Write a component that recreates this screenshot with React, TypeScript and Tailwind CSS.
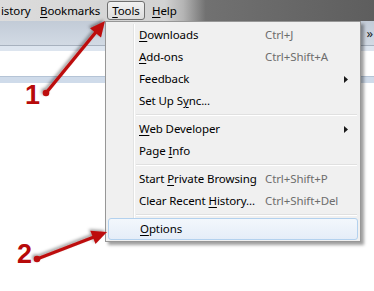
import type { ReactNode } from 'react'

type Item =
  | { kind: 'sep' }
  | { kind: 'item'; label: ReactNode; shortcut?: string; submenu?: boolean; active?: boolean }

const u = (c: string) => <span className="underline underline-offset-[2px]">{c}</span>

const ITEMS: Item[] = [
  { kind: 'item', label: <>{u('D')}ownloads</>, shortcut: 'Ctrl+J' },
  { kind: 'item', label: <>{u('A')}dd-ons</>, shortcut: 'Ctrl+Shift+A' },
  { kind: 'item', label: <>Feedback</>, submenu: true },
  { kind: 'item', label: <>Set Up S{u('y')}nc...</> },
  { kind: 'sep' },
  { kind: 'item', label: <>{u('W')}eb Developer</>, submenu: true },
  { kind: 'item', label: <>Page {u('I')}nfo</> },
  { kind: 'sep' },
  { kind: 'item', label: <>Start {u('P')}rivate Browsing</>, shortcut: 'Ctrl+Shift+P' },
  { kind: 'item', label: <>Clear Recent {u('H')}istory...</>, shortcut: 'Ctrl+Shift+Del' },
  { kind: 'sep' },
  { kind: 'item', label: <>{u('O')}ptions</>, active: true },
]

function MenuRow({ item }: { item: Item }) {
  if (item.kind === 'sep') {
    return (
      <div className="flex h-[6px]">
        <div className="w-[26px] shrink-0 border-r border-r-[#e2e3e3] shadow-[1px_0_0_#fff]" />
        <div className="flex-1 flex items-center pl-[2px] pr-[1px]">
          <div className="w-full h-[2px] border-t border-t-[#e0e0e0] border-b border-b-white" />
        </div>
      </div>
    )
  }
  return (
    <div
      className={`flex items-center h-[22px] leading-[22px] ${
        item.active
          ? 'rounded-[3px] border border-[#b3d1ee] bg-[linear-gradient(to_bottom,#f3f7fc,#e5edf8)]'
          : ''
      }`}
    >
      <div className={`w-[26px] shrink-0 self-stretch ${item.active ? '' : 'border-r border-r-[#e2e3e3] shadow-[1px_0_0_#fff]'}`} />
      <div className="w-[131px] shrink-0 pl-[5px] text-black whitespace-nowrap">{item.label}</div>
      {item.shortcut && <div className="text-[#6d6d6d] whitespace-nowrap">{item.shortcut}</div>}
      {item.submenu && (
        <svg className="ml-auto mr-[10px]" width="4" height="7" viewBox="0 0 4 7">
          <path d="M0 0 L4 3.5 L0 7 Z" fill="#1a1a1a" />
        </svg>
      )}
    </div>
  )
}

function Arrow({ s, t, base1, base2, line }: { s: [number, number]; t: [number, number]; base1: [number, number]; base2: [number, number]; line: [number, number] }) {
  return (
    <g>
      <line x1={s[0]} y1={s[1]} x2={line[0]} y2={line[1]} stroke="#bd0d0d" strokeWidth="3.4" strokeLinecap="round" />
      <polygon points={`${t[0]},${t[1]} ${base1[0]},${base1[1]} ${base2[0]},${base2[1]}`} fill="#bd0d0d" />
      <circle cx={s[0]} cy={s[1]} r="3.3" fill="#bd0d0d" />
    </g>
  )
}

export default function App() {
  return (
    <div className="relative w-[374px] h-[291px] overflow-hidden bg-white font-['Segoe_UI','Noto_Sans',sans-serif] text-[11.5px] tracking-[-0.1px]">
      {/* Menu bar */}
      <div className="flex items-center h-[21px] bg-[linear-gradient(to_right,#dcdcdc_0%,#d2d2d2_44%,#b4b4b4_49%,#717171_55%,#5e5e5e_100%)] text-black">
        <span className="pl-[1px] w-[40px] whitespace-nowrap">istory</span>
        <span className="w-[67px] whitespace-nowrap">{u('B')}ookmarks</span>
        <span className="w-[38px] h-[19px] leading-[17px] text-center rounded-[3px] border border-[#707070] bg-[linear-gradient(to_bottom,#f1f1f1,#dcdcdc)]">
          {u('T')}ools
        </span>
        <span className="ml-[7px]">{u('H')}elp</span>
      </div>

      {/* Toolbar */}
      <div className="flex items-center justify-end h-[25px] bg-[linear-gradient(to_bottom,#c2cbd7,#d2dae4)] border-b border-b-[#a7b1be] pr-[1px]">
        <span className="text-[#222] text-[13px] leading-none">»</span>
      </div>
      <div className="h-[5px] bg-[#dde5ef]" />
      <div className="h-[25px] bg-white" />
      <div className="h-[7px] bg-[#cfdbea] border-t border-t-[#b5c4d6]" />

      {/* Tools menu popup */}
      <div className="absolute left-[105px] top-[21px] w-[256px] border border-[#979797] bg-[#f0f0f0] px-[2px] pt-[2px] pb-[1px] shadow-[3px_3px_3px_rgba(0,0,0,0.38)]">
        {ITEMS.map((it, i) => (
          <MenuRow key={i} item={it} />
        ))}
      </div>

      {/* Annotation arrows */}
      <svg className="absolute inset-0 pointer-events-none" width="374" height="291">
        <defs>
          <filter id="sh" x="-20%" y="-20%" width="140%" height="140%">
            <feDropShadow dx="-1.5" dy="-1.5" stdDeviation="1.5" floodColor="#000" floodOpacity="0.4" />
          </filter>
        </defs>
        <g filter="url(#sh)">
          <Arrow s={[46, 93]} t={[105, 21]} base1={[101, 37.5]} base2={[90, 28.2]} line={[96, 32]} />
          <Arrow s={[37, 259]} t={[107, 232]} base1={[95.5, 244]} base2={[90.3, 230.8]} line={[94, 237]} />
        </g>
      </svg>
      <span className="absolute left-[25px] top-[82px] font-['Liberation_Sans',Arial,sans-serif] font-bold text-[27px] tracking-normal leading-none text-[#b70a0a]">1</span>
      <span className="absolute left-[17px] top-[241px] font-['Liberation_Sans',Arial,sans-serif] font-bold text-[27px] tracking-normal leading-none text-[#b70a0a]">2</span>
    </div>
  )
}
